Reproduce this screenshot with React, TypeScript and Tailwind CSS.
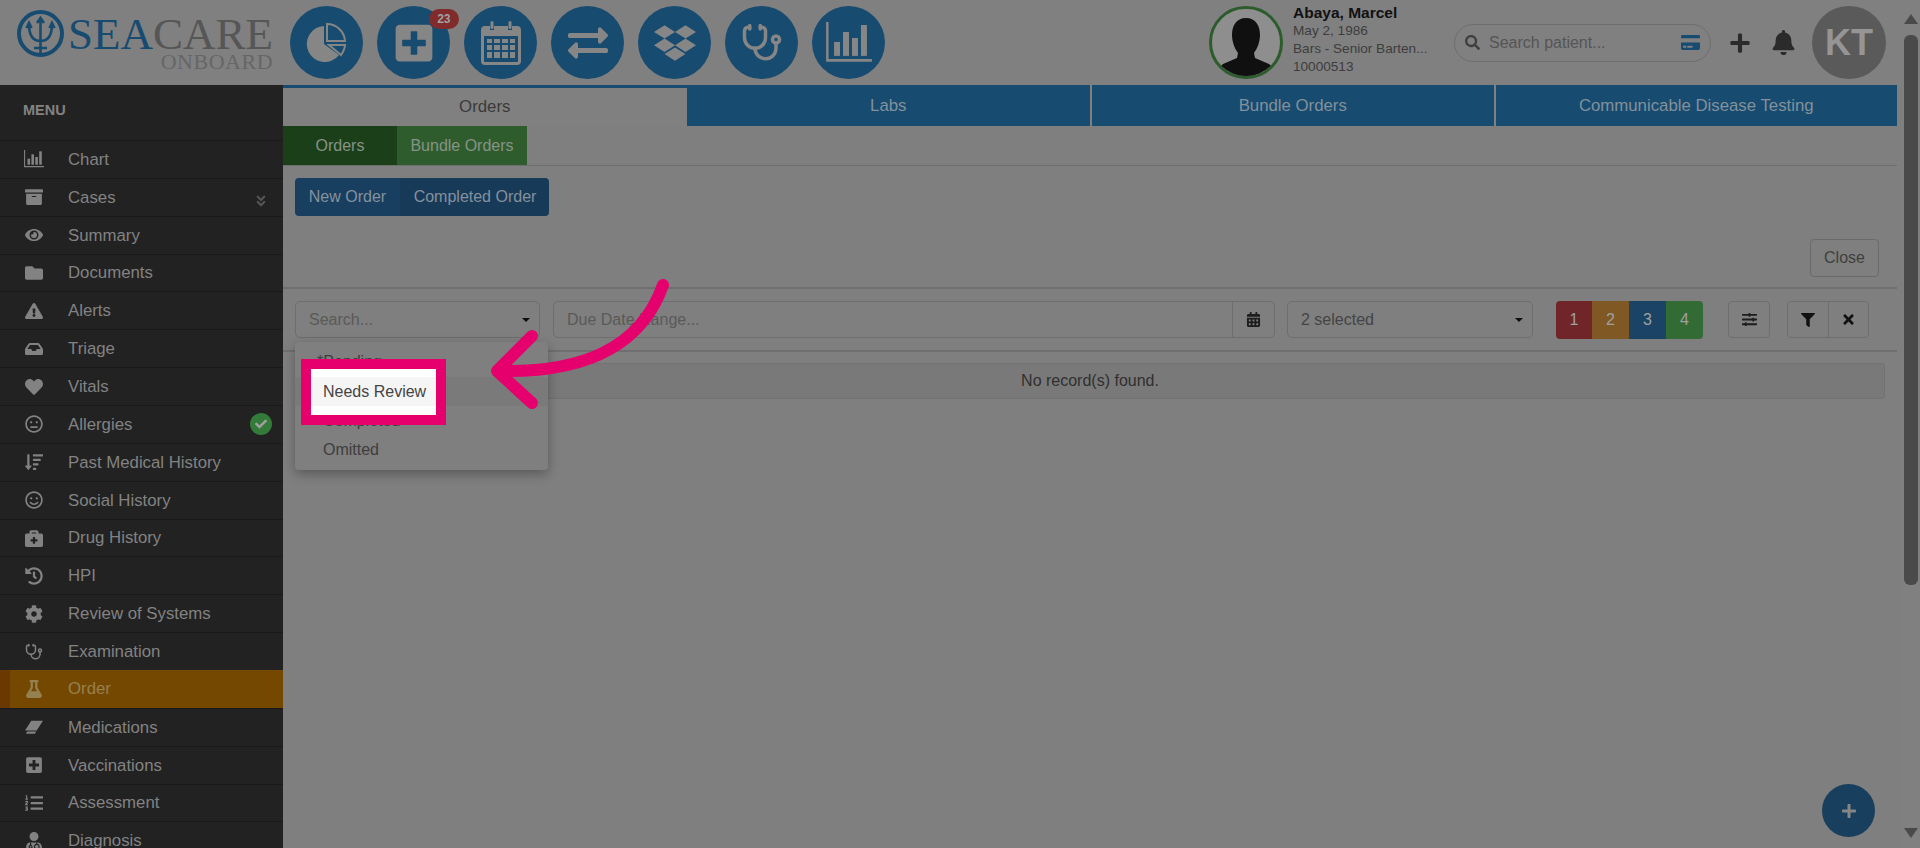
import { Stethoscope } from "lucide-react";
import {
  FaAngleDoubleDown,
  FaArchive,
  FaBell,
  FaBriefcaseMedical,
  FaCalendarAlt,
  FaCheck,
  FaCog,
  FaCreditCard,
  FaDropbox,
  FaExchangeAlt,
  FaExclamationTriangle,
  FaEye,
  FaFilter,
  FaFlask,
  FaFolder,
  FaHeart,
  FaHistory,
  FaInbox,
  FaListOl,
  FaPlus,
  FaPlusSquare,
  FaRegMeh,
  FaRegSmile,
  FaSearch,
  FaSlidersH,
  FaSortAmountDown,
  FaTimes,
  FaUserMd,
} from "react-icons/fa";

const BarsIcon = ({ size }: { size: number }) => (
  <svg width={size} height={size * 0.91} viewBox="0 0 46 42" fill="currentColor">
    <path d="M0 0h2.500v37H46v3H0z" />
    <rect x="8" y="20" width="6" height="14" />
    <rect x="17" y="10" width="6" height="24" />
    <rect x="26" y="16" width="6" height="18" />
    <rect x="35" y="3" width="6" height="31" />
  </svg>
);

const EraserIcon = ({ size }: { size: number }) => (
  <svg width={size} height={size} viewBox="0 0 20 20" fill="currentColor">
    <path d="M7 3h13l-7 11H0zM2.500 15h10l-1.500 2.500H1z" />
  </svg>
);

const menu = [
  { label: "Chart", icon: ({ size }: { size: number }) => <BarsIcon size={size + 2} /> },
  { label: "Cases", icon: FaArchive, more: true },
  { label: "Summary", icon: FaEye },
  { label: "Documents", icon: FaFolder },
  { label: "Alerts", icon: FaExclamationTriangle },
  { label: "Triage", icon: FaInbox },
  { label: "Vitals", icon: FaHeart },
  { label: "Allergies", icon: FaRegMeh, done: true },
  { label: "Past Medical History", icon: FaSortAmountDown },
  { label: "Social History", icon: FaRegSmile },
  { label: "Drug History", icon: FaBriefcaseMedical },
  { label: "HPI", icon: FaHistory },
  { label: "Review of Systems", icon: FaCog },
  { label: "Examination", icon: Stethoscope },
  { label: "Order", icon: FaFlask, active: true },
  { label: "Medications", icon: EraserIcon },
  { label: "Vaccinations", icon: FaPlusSquare },
  { label: "Assessment", icon: FaListOl },
  { label: "Diagnosis", icon: FaUserMd },
];

const Logo = () => (
  <div className="flex w-[283px] shrink-0 items-start self-start pl-[17px] pt-[10px]">
    <svg width="47" height="47" viewBox="0 0 47 47" fill="none" stroke="#174b6f" className="shrink-0">
      <circle cx="23.500" cy="23.500" r="21.500" strokeWidth="4" />
      <path d="M23.500 9v35M12 14c0 12 4 17 11.500 17S35 26 35 14M20 13l3.500-5 3.500 5M9.500 18l2.500-5 2.500 5M32.500 18l2.500-5 2.500 5" strokeWidth="2.600" />
      <path d="M17 38h13" strokeWidth="2.500" />
    </svg>
    <div className="ml-[4px] flex flex-col font-['Liberation_Serif',serif]">
      <div className="mt-[5px] text-[45px] leading-[38px] whitespace-nowrap">
        <span className="text-[#174b6f]">SEA</span>
        <span className="text-[#565656]">CARE</span>
      </div>
      <div className="text-right text-[22px] leading-[18px] tracking-[0.5px] text-[#666666]">ONBOARD</div>
    </div>
  </div>
);

const PieGlyph = () => (
  <svg width="42" height="42" viewBox="0 0 42 42" fill="none" stroke="currentColor" strokeWidth="2">
    <path d="M18 4A18 18 0 1 0 33 33L18 22Z" fill="currentColor" stroke="none" />
    <path d="M21 2A18 18 0 0 1 39 19H21Z" />
    <path d="M23 23H39C39 27 37 30 35 33Z" />
  </svg>
);

const CalendarGlyph = () => (
  <svg width="40" height="44" viewBox="0 0 40 44" fill="currentColor">
    <path
      fillRule="evenodd"
      d="M4 5h5v4h4V5h14v4h4V5h5a4 4 0 0 1 4 4v31a4 4 0 0 1-4 4H4a4 4 0 0 1-4-4V9a4 4 0 0 1 4-4zM3 15v25a1 1 0 0 0 1 1h32a1 1 0 0 0 1-1V15zM6 18h5v4H6zM13 18h6v4h-6zM21 18h6v4h-6zM29 18h5v4h-5zM6 24h5v5H6zM13 24h6v5h-6zM21 24h6v5h-6zM29 24h5v5h-5zM6 31h5v6H6zM13 31h6v6h-6zM21 31h6v6h-6zM29 31h5v6h-5z"
    />
    <rect x="9.500" y="0" width="3" height="8" rx="1.500" />
    <rect x="27.500" y="0" width="3" height="8" rx="1.500" />
  </svg>
);

const CircleLink = ({ children, badge }: { children: React.ReactNode; badge?: string }) => (
  <div className="relative flex h-[73px] w-[73px] shrink-0 items-center justify-center rounded-full bg-[#174b6f] text-[#868686]">
    {children}
    {badge && (
      <span className="absolute left-[71%] top-[3px] flex h-[20px] w-[30px] items-center justify-center rounded-full bg-[#812b2b] text-[12px] font-bold text-[#a0a0a0]">
        {badge}
      </span>
    )}
  </div>
);

const Caret = () => <span className="h-0 w-0 border-x-[4px] border-t-[4px] border-x-transparent border-t-[#0d0d0d]" />;

const App = () => {
  return (
    <div className="flex h-[848px] w-full overflow-hidden bg-[#808080] font-['Liberation_Sans',Arial,sans-serif] text-[16px] text-[#3a3a3a]">
      <div className="relative flex min-w-0 flex-1 flex-col">
        {/* Header */}
        <header className="flex h-[85px] shrink-0 items-center pr-[16px]">
          <Logo />
          <div className="ml-[7px] flex gap-[14px]">
            <CircleLink>
              <PieGlyph />
            </CircleLink>
            <CircleLink badge="23">
              <FaPlusSquare size={42} />
            </CircleLink>
            <CircleLink>
              <CalendarGlyph />
            </CircleLink>
            <CircleLink>
              <FaExchangeAlt size={40} />
            </CircleLink>
            <CircleLink>
              <FaDropbox size={42} />
            </CircleLink>
            <CircleLink>
              <Stethoscope size={42} strokeWidth={2} />
            </CircleLink>
            <CircleLink>
              <BarsIcon size={46} />
            </CircleLink>
          </div>

          <div className="ml-auto flex h-[73px] w-[74px] shrink-0 items-end justify-center overflow-hidden rounded-full border-[3px] border-[#2c5c2c] bg-[#8e8e8e]">
            <svg width="60" height="60" viewBox="0 0 60 60" fill="#101010">
              <path d="M30 2c10 0 14 8 14 17 0 7-3 14-6 18l1 5 14 6c3 2 5 6 6 12H1c1-6 3-10 6-12l14-6 1-5c-3-4-6-11-6-18C16 10 20 2 30 2z" />
            </svg>
          </div>
          <div className="mb-[5px] ml-[10px] w-[161px] shrink-0 text-[13.600px] leading-[18px] text-[#3d3d3d]">
            <div className="text-[15.500px] font-bold text-[#111111]">Abaya, Marcel</div>
            <div>May 2, 1986</div>
            <div>Bars - Senior Barten...</div>
            <div>10000513</div>
          </div>
          <div className="flex h-[38px] w-[257px] shrink-0 items-center rounded-full border border-[#6e6e6e] pl-[10px] pr-[10px]">
            <FaSearch size={15} className="text-[#3f3f3f]" />
            <span className="ml-[9px] flex-1 text-[#555555]">Search patient...</span>
            <FaCreditCard size={19} className="text-[#174b6f]" />
          </div>
          <FaPlus size={22} className="ml-[18px] shrink-0 text-[#2b2b2b]" />
          <FaBell size={25} className="ml-[20px] shrink-0 text-[#2b2b2b]" />
          <div className="ml-[16px] flex h-[73px] w-[74px] shrink-0 items-center justify-center rounded-full bg-[#5a5a5a] text-[36px] font-bold text-[#959595]">
            KT
          </div>
        </header>

        <div className="flex min-h-0 flex-1">
          {/* Sidebar */}
          <aside className="w-[283px] shrink-0 overflow-hidden bg-[#222222] text-[#828282]">
            <div className="flex h-[55px] items-center pb-[3px] pl-[23px] text-[14.500px] font-bold">MENU</div>
            {menu.map((item) => {
              const Icon = item.icon;
              return (
                <div
                  key={item.label}
                  className={
                    item.active
                      ? "flex h-[37.860px] items-center border-l-[10px] border-[#6a3800] bg-[#754800] text-[#95804f]"
                      : "flex h-[37.860px] items-center border-t border-[#191919]"
                  }
                >
                  <span className={item.active ? "flex w-[58px] justify-center pr-[10px]" : "flex w-[68px] justify-center"}>
                    <Icon size={18} />
                  </span>
                  <span className="flex-1 text-[16.800px]">{item.label}</span>
                  {item.more && <FaAngleDoubleDown size={14} className="mr-[15px] mt-[8px] text-[#565656]" />}
                  {item.done && (
                    <span className="mr-[11px] flex h-[22px] w-[22px] items-center justify-center rounded-full bg-[#347a38] text-[#a0a0a0]">
                      <FaCheck size={12} />
                    </span>
                  )}
                </div>
              );
            })}
          </aside>

          {/* Content */}
          <main className="min-w-0 flex-1 bg-[#7e7f7e] pr-[5px]">
            <div className="grid h-[41px] grid-cols-4 text-[16.800px] text-[#82919c]">
              <div className="flex items-center justify-center border-t-[3px] border-[#174b6f] bg-[#808080] text-[#3a3a3a]">Orders</div>
              <div className="flex items-center justify-center bg-[#174b6f]">Labs</div>
              <div className="flex items-center justify-center border-l-2 border-[#808080] bg-[#174b6f]">Bundle Orders</div>
              <div className="flex items-center justify-center border-l-2 border-[#808080] bg-[#174b6f]">Communicable Disease Testing</div>
            </div>
            <div className="flex h-[40px] border-b border-[#6e6e6e] text-[#869386]">
              <div className="flex w-[114px] items-center justify-center bg-[#1a3f19]">Orders</div>
              <div className="flex w-[130px] items-center justify-center bg-[#2f5c2d]">Bundle Orders</div>
            </div>

            <div className="pl-[12px] pt-[12px]">
              <div className="flex h-[38px] w-[254px] overflow-hidden rounded-[4px] text-[#84919d]">
                <div className="flex w-[105px] items-center justify-center bg-[#183f60]">New Order</div>
                <div className="flex flex-1 items-center justify-center border-l border-[#173a58] bg-[#173a58]">Completed Order</div>
              </div>
            </div>

            <div className="mt-[23px] flex h-[50px] justify-end border-b-2 border-[#6f6f6f] pr-[18px]">
              <div className="flex h-[38px] w-[69px] items-center justify-center rounded-[4px] border border-[#6a6a6a] text-[#3f3f3f]">Close</div>
            </div>

            <div className="flex h-[63px] items-start border-b-2 border-[#6f6f6f] pl-[12px] pt-[12px]">
              <div className="relative flex h-[37px] w-[245px] items-center justify-between rounded-[5px] border border-[#6e6e6e] pl-[13px] pr-[9px] text-[#5a5a5a]">
                Search...
                <Caret />
                <div className="absolute left-[-1px] top-[40px] z-10 w-[253px] rounded-[4px] bg-[#7f7f7f] py-[5px] text-[#3d3d3d] shadow-[0_4px_12px_rgba(0,0,0,0.3)]">
                  <div className="flex h-[29.500px] items-center pl-[22px]">*Pending</div>
                  <div className="flex h-[29.500px] items-center bg-[#7a7a7a] pl-[28px]">Needs Review</div>
                  <div className="flex h-[29.500px] items-center pl-[28px]">Completed</div>
                  <div className="flex h-[29.500px] items-center pl-[28px]">Omitted</div>
                  {/* highlighted option, cut out of the dark layer */}
                  <div className="absolute left-[6px] top-[17px] h-[66px] w-[145px] border-[10px] border-[#e6006e] bg-white pt-[8px] text-[#444444]">
                    <div className="flex h-[29px] items-center bg-[#f5f5f5] pl-[12px]">Needs Review</div>
                  </div>
                </div>
              </div>
              <div className="ml-[13px] flex h-[37px] w-[722px] rounded-[5px] border border-[#6e6e6e] text-[#5a5a5a]">
                <div className="flex flex-1 items-center pl-[13px]">Due Date Range...</div>
                <div className="flex w-[42px] items-center justify-center border-l border-[#6e6e6e] text-[#1d1d1d]">
                  <FaCalendarAlt size={15} />
                </div>
              </div>
              <div className="ml-[12px] flex h-[37px] w-[246px] items-center justify-between rounded-[5px] border border-[#6e6e6e] pl-[13px] pr-[9px] text-[#454545]">
                2 selected
                <Caret />
              </div>
              <div className="ml-[23px] flex h-[38px] w-[147px] overflow-hidden rounded-[4px] text-center leading-[38px] text-[#a0a0a0]">
                <div className="w-[36px] bg-[#702628]">1</div>
                <div className="w-[37px] bg-[#7f5823]">2</div>
                <div className="w-[37px] bg-[#1a4365]">3</div>
                <div className="w-[37px] bg-[#336b35]">4</div>
              </div>
              <div className="ml-[25px] flex h-[37px] w-[42px] items-center justify-center rounded-[4px] border border-[#6e6e6e] text-[#1d1d1d]">
                <FaSlidersH size={15} />
              </div>
              <div className="ml-[17px] flex h-[37px] w-[82px] rounded-[4px] border border-[#6e6e6e] text-[#111111]">
                <div className="flex flex-1 items-center justify-center border-r border-[#6e6e6e]">
                  <FaFilter size={14} />
                </div>
                <div className="flex flex-1 items-center justify-center">
                  <FaTimes size={15} />
                </div>
              </div>
            </div>

            <div className="ml-[12px] mr-[12px] mt-[11px] flex h-[36px] items-center justify-center rounded-[3px] border border-[#727272] bg-[#797979] text-[#303030]">
              No record(s) found.
            </div>
          </main>
        </div>

        {/* Arrow pointing at the option */}
        <svg
          width="190"
          height="140"
          viewBox="0 0 190 140"
          fill="none"
          stroke="#e6006e"
          strokeWidth="12"
          strokeLinecap="round"
          strokeLinejoin="round"
          className="pointer-events-none absolute left-[490px] top-[278px] z-20"
        >
          <path d="M173 7C150 72 90 95 8 93" />
          <path d="M42 58L7 93L42 125" />
        </svg>

        <button className="absolute bottom-[11px] right-[27px] flex h-[53px] w-[53px] items-center justify-center rounded-full bg-[#193f5f] text-[#868686]">
          <FaPlus size={16} />
        </button>
      </div>

      {/* Scrollbar */}
      <div className="flex w-[18px] shrink-0 flex-col items-center">
        <svg width="16" height="10" viewBox="0 0 16 10" fill="#4a4a4a" className="mt-[14px]">
          <path d="M8 0l7 10H1z" />
        </svg>
        <div className="mt-[11px] h-[550px] w-[14px] rounded-[6px] bg-[#4a4a4a]" />
        <svg width="16" height="10" viewBox="0 0 16 10" fill="#4a4a4a" className="mb-[10px] mt-auto">
          <path d="M8 10L1 0h14z" />
        </svg>
      </div>
    </div>
  );
};

export default App;
